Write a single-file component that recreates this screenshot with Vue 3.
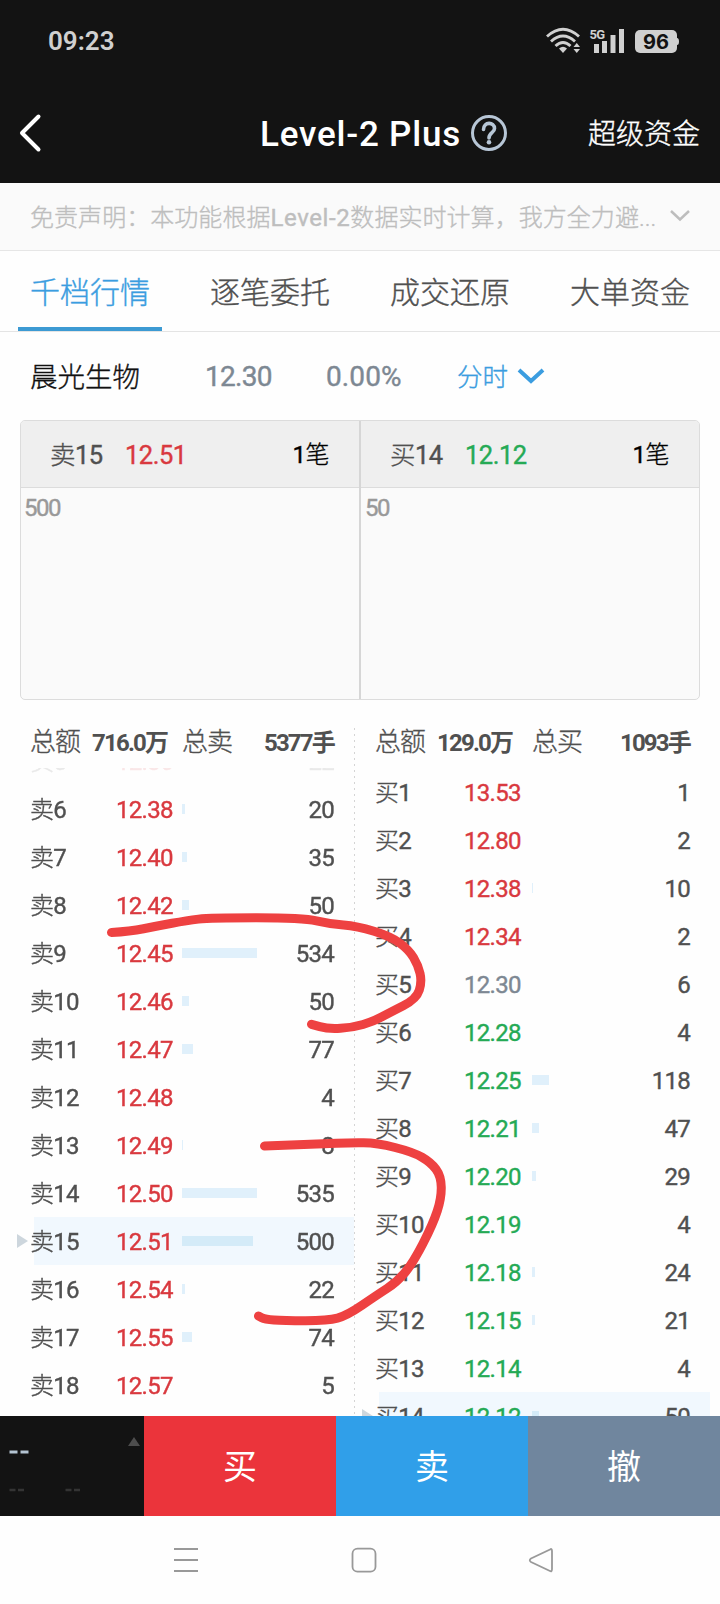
<script setup>
const tabs = ['千档行情', '逐笔委托', '成交还原', '大单资金']

const row = (side) => ([no, price, qty, tone = side === '卖' ? 'up' : 'down']) => ({
  side,
  no,
  price,
  qty,
  tone,
  bar: qty >= 8 ? Math.max(1, Math.round(qty * 0.141)) : 0,
})

const sells = [
  [5, '12.36', 22], [6, '12.38', 20], [7, '12.40', 35], [8, '12.42', 50], [9, '12.45', 534],
  [10, '12.46', 50], [11, '12.47', 77], [12, '12.48', 4], [13, '12.49', 8],
  [14, '12.50', 535], [15, '12.51', 500], [16, '12.54', 22], [17, '12.55', 74], [18, '12.57', 5],
].map(row('卖'))

const buys = [
  [1, '13.53', 1, 'up'], [2, '12.80', 2, 'up'], [3, '12.38', 10, 'up'], [4, '12.34', 2, 'up'],
  [5, '12.30', 6, 'flat'], [6, '12.28', 4], [7, '12.25', 118], [8, '12.21', 47], [9, '12.20', 29],
  [10, '12.19', 4], [11, '12.18', 24], [12, '12.15', 21], [13, '12.14', 4], [14, '12.12', 50],
].map(row('买'))

const books = [
  { key: 'sell', amount: '716.0万', side: '总卖', lots: '5377手', rows: sells, active: 15 },
  { key: 'buy', amount: '129.0万', side: '总买', lots: '1093手', rows: buys, active: 14 },
]

const queues = [
  { side: '卖', no: 15, price: '12.51', tone: 'up', value: '500' },
  { side: '买', no: 14, price: '12.12', tone: 'down', value: '50' },
]

// Smooths a hand-drawn stroke by running curves through segment midpoints.
const smooth = (pts) => {
  let d = `M${pts[0]}`
  for (let i = 1; i < pts.length - 1; i++) {
    const [x, y] = pts[i]
    const [nx, ny] = pts[i + 1]
    d += `Q${x} ${y} ${(x + nx) / 2} ${(y + ny) / 2}`
  }
  return d + `L${pts[pts.length - 1]}`
}

const strokes = [
  smooth([[111.5, 932.5], [130, 931.5], [157, 926], [187, 920.5], [210, 917.7], [303, 917.7], [330, 924], [357, 926], [391, 936.5], [409, 950], [418, 965], [422, 981.5], [416.5, 999], [390, 1012.5], [373, 1021.5], [353, 1027.5], [328, 1029], [311.5, 1024.3]]),
  smooth([[264.5, 1146], [323, 1144], [350, 1142.7], [377, 1143], [413, 1152], [431, 1162.5], [441, 1176], [441.5, 1198], [433, 1224], [413, 1263], [397, 1282], [377, 1295], [347, 1315.5], [328, 1320.7], [283, 1320.7], [265, 1319.3], [258.5, 1316]]),
]
</script>

<template>
  <div class="screen">
    <div class="status">
      <span class="clock">09:23</span>
      <svg class="signals" width="136" height="28" viewBox="0 0 136 28">
        <g fill="none" stroke="#d0d0d0" stroke-width="2.900">
          <path d="M2 10.500Q18 -4 34 10.500" />
          <path d="M6 15.500Q18 4.500 30 15.500" />
          <path d="M10.500 20Q18 13 25.500 20" />
        </g>
        <path d="M14 22.500Q18 19 22 22.500L18 27Z" fill="#d0d0d0" />
        <path d="M28.500 21h6.500l-3.250-4zM28.500 23h6.500l-3.250 4z" fill="#d0d0d0" />
        <g fill="#d0d0d0">
          <rect x="49" y="18" width="5" height="9" />
          <rect x="57" y="15" width="5" height="12" />
          <rect x="65.500" y="9" width="5" height="18" />
          <rect x="74" y="3" width="5" height="24" />
          <rect x="90" y="4" width="42" height="23" rx="5" />
          <path d="M132 12q2 0 2 3.500t-2 3.500z" />
        </g>
        <text class="net" x="44.500" y="12.500" textLength="15.500">5G</text>
        <text class="power" x="98" y="23.300" textLength="26">96</text>
      </svg>
    </div>

    <header class="nav">
      <svg class="back" width="24" height="40" viewBox="0 0 24 40">
        <path d="M20.500 3.500L4 20L20.500 36.500" fill="none" stroke="#fff" stroke-width="4" stroke-linecap="round" stroke-linejoin="round" />
      </svg>
      <h1 class="title">Level-2 Plus</h1>
      <svg class="help" width="38" height="38" viewBox="0 0 38 38" fill="none" stroke="#b7c6d6">
        <circle cx="19" cy="19" r="16.500" stroke-width="3" />
        <path d="M13.500 15.500C13.500 7.500 24.500 7.500 24.500 14.500C24.500 19 19 18.500 19 24" stroke-width="3.600" stroke-linecap="round" />
        <circle cx="19" cy="28.300" r="2.300" fill="#b7c6d6" stroke="none" />
      </svg>
      <span class="fund">超级资金</span>
    </header>

    <div class="notice">
      <span class="notice-text">免责声明：本功能根据<span class="num">Level-2</span>数据实时计算，我方全力避...</span>
      <svg width="22" height="14" viewBox="0 0 22 14"><path d="M2 2L11 10.500L20 2" fill="none" stroke="#bdbdbd" stroke-width="2.500" /></svg>
    </div>

    <nav class="tabs">
      <div v-for="(t, i) in tabs" :key="t" class="tab" :class="{ on: i === 0 }">{{ t }}</div>
    </nav>

    <div class="stock">
      <span class="name">晨光生物</span>
      <span class="last num">12.30</span>
      <span class="pct num">0.00%</span>
      <span class="mode">分时</span>
      <svg width="30" height="18" viewBox="0 0 30 18"><path d="M3 3L15 14L27 3" fill="none" stroke="#3b9de0" stroke-width="4" /></svg>
    </div>

    <section class="queues">
      <div v-for="q in queues" :key="q.side" class="queue">
        <div class="queue-head">
          <span class="q-label">{{ q.side }}<span class="num">{{ q.no }}</span></span>
          <span class="q-price num" :class="q.tone">{{ q.price }}</span>
          <span class="q-count"><span class="num">1</span>笔</span>
        </div>
        <div class="queue-body num">{{ q.value }}</div>
      </div>
    </section>

    <section class="depth">
      <div v-for="b in books" :key="b.key" class="book" :class="b.key">
        <div class="totals">
          <span class="t-label">总额</span>
          <b class="t-amount">{{ b.amount }}</b>
          <span class="t-label">{{ b.side }}</span>
          <b class="t-lots">{{ b.lots }}</b>
        </div>
        <div class="list">
          <div class="rows">
            <div v-for="r in b.rows" :key="r.no" class="row" :class="{ active: r.no === b.active }">
              <svg v-if="r.no === b.active" class="mark" width="11" height="14" viewBox="0 0 11 14"><path d="M0 0L11 7L0 14Z" fill="#cdd6dd" /></svg>
              <span class="label">{{ r.side }}<span class="num">{{ r.no }}</span></span>
              <span class="price num" :class="r.tone">{{ r.price }}</span>
              <span class="track"><i class="bar" :style="{ width: r.bar + 'px' }"></i></span>
              <span class="qty num">{{ r.qty }}</span>
            </div>
          </div>
        </div>
      </div>
    </section>

    <footer class="trade">
      <div class="index">
        <svg class="up-mark" width="12" height="9" viewBox="0 0 12 9"><path d="M6 0L12 9H0Z" fill="#4d4d4d" /></svg>
        <svg width="84" height="44" viewBox="0 0 84 44">
          <path d="M0.500 2h8M11.500 2h8" stroke="#b4c4d2" stroke-width="3" />
          <path d="M0.500 40h6M9 40h6M56.500 40h6M65 40h6" stroke="#343434" stroke-width="2.500" />
        </svg>
      </div>
      <button class="act buy-btn">买</button>
      <button class="act sell-btn">卖</button>
      <button class="act cancel-btn">撤</button>
    </footer>

    <div class="system">
      <svg width="380" height="28" viewBox="0 0 380 28" fill="none" stroke="#999" stroke-width="1.800">
        <path d="M0 3h24M0 14h24M0 25h24" />
        <rect x="178.500" y="2.700" width="23" height="23" rx="5" />
        <path d="M376 3.500Q378 2 378 5V23Q378 26 376 25L357 16Q354.500 14.300 357 12.500Z" />
      </svg>
    </div>

    <svg class="scribble" width="720" height="1604" viewBox="0 0 720 1604">
      <path v-for="d in strokes" :key="d" :d="d" />
    </svg>
  </div>
</template>

<style>
body {
  margin: 0;
  background: #fefefe;
}
</style>

<style scoped>
.screen {
  position: relative;
  width: 720px;
  height: 1604px;
  overflow: hidden;
  background: #fefefe;
  color: #505050;
  font-family: Roboto, "Noto Sans CJK SC", sans-serif;
  font-size: 24px;
  font-weight: 300;
  line-height: 1.2;
  white-space: nowrap;
  -webkit-text-stroke-width: 0.35px;
}
.num {
  font-weight: 400;
  -webkit-text-stroke-width: 0.4px;
}
.status {
  display: flex;
  justify-content: space-between;
  box-sizing: border-box;
  height: 80px;
  padding: 26px 39px 0 48px;
  background: #131313;
  -webkit-text-stroke-width: 0;
}
.clock {
  color: #d0d0d0;
  font-size: 26px;
  font-weight: 600;
  line-height: 30px;
}
.net {
  fill: #d0d0d0;
  font-size: 13px;
  font-weight: 700;
}
.power {
  fill: #131313;
  font-family: Inter, sans-serif;
  font-size: 20px;
  font-weight: 700;
}
.nav {
  display: flex;
  align-items: center;
  box-sizing: border-box;
  height: 103px;
  padding: 0 20px 0 18px;
  background: #131313;
  color: #fff;
}
.back {
  margin-top: 3px;
}
.title {
  margin: 6px 0 0 218px;
  width: 201px;
  font-size: 35px;
  font-weight: 500;
  letter-spacing: 0.8px;
  -webkit-text-stroke-width: 0;
}
.help {
  margin: 3px 0 0 9px;
}
.fund {
  margin: 7px 0 0 auto;
  font-size: 28px;
}
.notice {
  display: flex;
  align-items: center;
  justify-content: space-between;
  box-sizing: border-box;
  height: 68px;
  padding: 4px 29px 0 30px;
  background: #fafafa;
  border-bottom: 1px solid #e6e6e6;
  color: #bebebe;
}
.notice-text {
  letter-spacing: 0.05px;
}
.notice .num {
  letter-spacing: 0.6px;
}
.notice svg {
  margin-top: -6px;
}
.tabs {
  display: grid;
  grid-template-columns: repeat(4, 1fr);
  border-bottom: 1px solid #e4e4e4;
  font-size: 30px;
}
.tab {
  height: 76px;
  margin: 0 18px;
  border-bottom: 4px solid transparent;
  line-height: 83px;
  text-align: center;
}
.tab.on {
  border-color: #3c9ad3;
  color: #3b9de0;
}
.stock {
  display: grid;
  grid-template-columns: 175px 121px 131px 59px 30px;
  align-items: center;
  box-sizing: border-box;
  height: 88px;
  padding: 2px 0 0 30px;
  font-size: 28px;
}
.stock svg {
  margin-top: -3px;
}
.name {
  color: #111;
  font-size: 27.5px;
}
.last,
.pct {
  color: #7d8893;
  letter-spacing: -0.7px;
}
.pct {
  letter-spacing: 0.1px;
}
.mode {
  color: #3b9de0;
  font-size: 25.5px;
}
.queues {
  display: grid;
  grid-template-columns: 1fr 1fr;
  box-sizing: border-box;
  height: 280px;
  margin: 0 20px;
  border: 1px solid #dcdcdc;
  border-radius: 5px;
  overflow: hidden;
  background: #fafafa;
}
.queue + .queue {
  border-left: 1px solid #d6d6d6;
}
.queue:first-child {
  border-right: 1px solid #d6d6d6;
}
.queue-head {
  display: grid;
  grid-template-columns: 75px 1fr auto;
  align-items: center;
  height: 67px;
  padding: 2px 30px 0 29px;
  box-sizing: border-box;
  background: #efefef;
  border-bottom: 1px solid #dcdcdc;
  font-size: 25.5px;
  letter-spacing: -0.5px;
}
.q-count {
  color: #000;
  font-size: 24px;
}
.queue-body {
  padding: 5px 3px;
  color: #999;
  line-height: 30px;
  letter-spacing: -1.5px;
}
.queue + .queue .queue-body {
  padding-left: 4px;
}
.depth {
  display: grid;
  grid-template-columns: 354px 366px;
  height: 716px;
  background: repeating-linear-gradient(#d4d4d4 0 2px, transparent 2px 6px) 354px 28px / 1px 688px no-repeat;
}
.book {
  display: flex;
  flex-direction: column;
  min-width: 0;
  height: 716px;
}
.totals {
  display: grid;
  align-items: center;
  box-sizing: border-box;
  height: 68px;
  padding-top: 18px;
  letter-spacing: -1px;
}
.totals b {
  font-weight: 700;
  letter-spacing: -1.8px;
  -webkit-text-stroke-width: 0;
}
.sell .totals {
  grid-template-columns: 62px 90px 56px 1fr;
  padding-left: 30px;
  padding-right: 20px;
}
.buy .totals {
  grid-template-columns: 62px 95px 56px 1fr;
  padding-left: 21px;
  padding-right: 30px;
}
.t-label {
  font-size: 26px;
}
.t-lots {
  text-align: right;
}
.list {
  flex: 1;
  overflow: hidden;
}
.sell .list {
  -webkit-mask-image: linear-gradient(rgba(0, 0, 0, 0.12) 0, rgba(0, 0, 0, 0.12) 16px, #000 17px);
  mask-image: linear-gradient(rgba(0, 0, 0, 0.12) 0, rgba(0, 0, 0, 0.12) 16px, #000 17px);
}
.sell .rows {
  margin-top: -31px;
}
.row {
  position: relative;
  display: grid;
  align-items: center;
  height: 48px;
  line-height: 28px;
  letter-spacing: -0.7px;
}
.row > span:not(.track) {
  padding-top: 2px;
}
.sell .row {
  grid-template-columns: 86px 66px 1fr auto;
  padding-left: 30px;
  padding-right: 20px;
}
.buy .row {
  grid-template-columns: 88px 68px 1fr auto;
  padding-left: 22px;
  padding-right: 30px;
}
.buy .label {
  margin-left: -1px;
}
.sell .row.active {
  background: linear-gradient(#f1f8fe, #f1f8fe) 34px 0 / 320px 48px no-repeat;
}
.buy .row.active {
  background: linear-gradient(#f1f8fe, #f1f8fe) 25px 0 / 331px 48px no-repeat;
}
.mark {
  position: absolute;
  top: 17px;
  left: 17px;
}
.buy .mark {
  left: 8px;
}
.bar {
  display: block;
  height: 10px;
  background: #e0f0fb;
}
.active .bar {
  background: #d4ebf8;
}
.up {
  color: #d9393f;
}
.down {
  color: #25aa55;
}
.flat {
  color: #7d8893;
}
.trade {
  display: grid;
  grid-template-columns: 144px 192px 192px 192px;
  height: 100px;
}
.index {
  position: relative;
  box-sizing: border-box;
  padding: 34px 0 0 9px;
  background: #131313;
}
.up-mark {
  position: absolute;
  top: 21px;
  right: 4px;
}
.act {
  padding: 0 0 3px;
  border: 0;
  color: #fff;
  font: 400 34px "Noto Sans CJK SC", sans-serif;
  -webkit-text-stroke-width: 0;
}
.buy-btn {
  background: #eb343b;
}
.sell-btn {
  background: #309fe9;
}
.cancel-btn {
  background: #70869e;
}
.system {
  display: flex;
  height: 88px;
  padding: 30px 0 0 174px;
  box-sizing: border-box;
}
.scribble {
  position: absolute;
  inset: 0;
  pointer-events: none;
}
.scribble path {
  fill: none;
  stroke: #ee4141;
  stroke-width: 9;
  stroke-linecap: round;
  stroke-linejoin: round;
}
</style>
